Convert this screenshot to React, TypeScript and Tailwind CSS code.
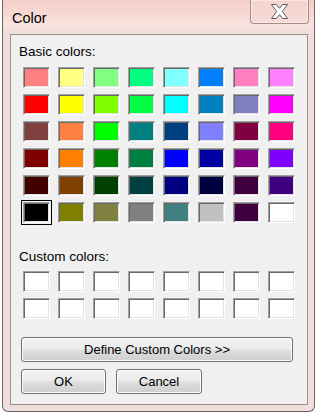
const BASIC = [
  ["#ff8080", "#ffff80", "#80ff80", "#00ff80", "#80ffff", "#0080ff", "#ff80c0", "#ff80ff"],
  ["#ff0000", "#ffff00", "#80ff00", "#00ff40", "#00ffff", "#0080c0", "#8080c0", "#ff00ff"],
  ["#804040", "#ff8040", "#00ff00", "#008080", "#004080", "#8080ff", "#800040", "#ff0080"],
  ["#800000", "#ff8000", "#008000", "#008040", "#0000ff", "#0000a0", "#800080", "#8000ff"],
  ["#400000", "#804000", "#004000", "#004040", "#000080", "#000040", "#400040", "#400080"],
  ["#000000", "#808000", "#808040", "#808080", "#408080", "#c0c0c0", "#400040", "#ffffff"],
];

const CUSTOM = Array.from({ length: 16 }, () => "#ffffff");

function Swatch({ color, selected }: { color: string; selected?: boolean }) {
  return (
    <div className={selected ? "outline outline-1 outline-black outline-offset-1" : ""}>
      <div
        className="h-[21px] w-[27px] border border-t-[#a0a0a0] border-l-[#a0a0a0] border-b-white border-r-white shadow-[inset_1px_1px_0_#696969,inset_-1px_-1px_0_#e3e3e3]"
        style={{ backgroundColor: color }}
      />
    </div>
  );
}

function Button({ label, className }: { label: string; className: string }) {
  return (
    <div
      className={`flex h-[25px] items-center justify-center rounded-[3px] border border-[#707070] bg-[linear-gradient(to_bottom,#f2f2f2_0%,#ebebeb_48%,#dddddd_52%,#cfcfcf_100%)] text-[13px] text-black shadow-[inset_0_0_0_1px_#fcfcfc] ${className}`}
    >
      {label}
    </div>
  );
}

export default function App() {
  return (
    <div className="h-[413px] w-[316px] overflow-hidden bg-white font-['Liberation_Sans',Arial,sans-serif]">
      <div className="ml-[2px] flex h-[412px] w-[313px] flex-col rounded-b-[6px] border border-t-0 border-[#6e6262] bg-[#efdedc] pb-[6px] pl-[7px] pr-[5px]">
        {/* Title bar */}
        <div className="-ml-[7px] -mr-[5px] flex h-[34px] items-start bg-[linear-gradient(to_bottom,#f4cfc9_0%,#f7d9d4_45%,#f9e3df_70%,#efdedc_100%)] pl-[9px] pr-[5px]">
          <span className="mt-[9px] text-[14.5px] leading-[18px] text-black">Color</span>
          <div className="ml-auto flex h-[24px] w-[59px] items-center justify-center rounded-b-[4px] border border-t-0 border-[#a48c89] bg-[linear-gradient(to_bottom,#f4d3ce,#f6dcd8)] shadow-[inset_0_0_0_1px_#fbe9e6]">
            <svg width="17" height="15" viewBox="0 0 17 15">
              <polygon
                points="0.5,0.5 5.3,0.5 8.5,4.3 11.7,0.5 16.5,0.5 11.3,7.5 16.5,14.5 11.7,14.5 8.5,10.7 5.3,14.5 0.5,14.5 5.7,7.5"
                fill="#ffffff"
                stroke="#5a5a5a"
                strokeWidth="1"
                strokeLinejoin="round"
              />
            </svg>
          </div>
        </div>

        {/* Client area */}
        <div className="flex h-[371px] w-[298px] flex-col border border-[#9b8f8e] bg-[#f0f0f0] pl-[8px] pt-[9px] text-black">
          <div className="text-[13.5px] leading-[15px]">Basic colors:</div>
          <div className="ml-[4px] mt-[8px] grid w-fit grid-cols-8 gap-x-[8px] gap-y-[6px]">
            {BASIC.flatMap((row, r) =>
              row.map((c, i) => <Swatch key={`${r}-${i}`} color={c} selected={r === 5 && i === 0} />),
            )}
          </div>

          <div className="mt-[26px] text-[13.5px] leading-[15px]">Custom colors:</div>
          <div className="ml-[4px] mt-[7px] grid w-fit grid-cols-8 gap-x-[8px] gap-y-[6px]">
            {CUSTOM.map((c, i) => (
              <Swatch key={i} color={c} />
            ))}
          </div>

          <Button label="Define Custom Colors >>" className="ml-[2px] mt-[18px] w-[272px]" />
          <div className="ml-[2px] mt-[7px] flex gap-[10px]">
            <Button label="OK" className="w-[85px]" />
            <Button label="Cancel" className="w-[86px]" />
          </div>
        </div>
      </div>
    </div>
  );
}
